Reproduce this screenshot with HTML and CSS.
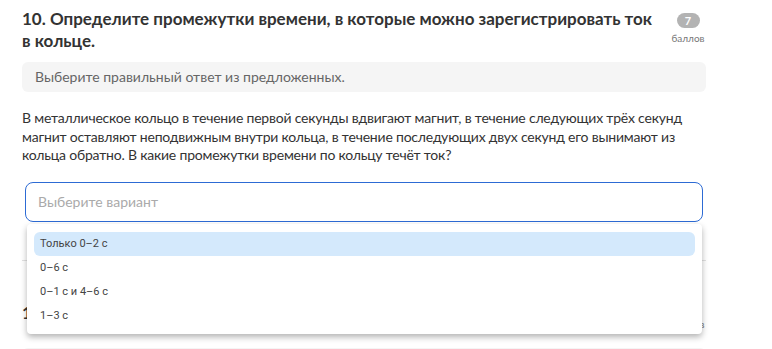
FILE: index.html
```html
<!DOCTYPE html>
<html lang="ru">
  <head>
    <meta charset="utf-8" />
    <title>Вопрос 10</title>
    <link rel="stylesheet" href="styles.css">
  </head>
  <body>
    <div class="quiz">
      <div class="question">
        <div class="q-head">
          <h2 class="q-title">10. Определите промежутки времени, в которые можно зарегистрировать ток в кольце.</h2>
          <div class="q-score">
            <span class="badge">7</span>
            <span class="points">баллов</span>
          </div>
        </div>
        <div class="hint">Выберите правильный ответ из предложенных.</div>
        <p class="q-text">В металлическое кольцо в течение первой секунды вдвигают магнит, в течение следующих трёх секунд магнит оставляют неподвижным внутри кольца, в течение последующих двух секунд его вынимают из кольца обратно. В какие промежутки времени по кольцу течёт ток?</p>
        <div class="select">
          <div class="select-box">Выберите вариант</div>
          <ul class="dropdown">
            <li class="option active">Только 0–2 с</li>
            <li class="option">0–6 с</li>
            <li class="option">0–1 с и 4–6 с</li>
            <li class="option">1–3 с</li>
          </ul>
        </div>
      </div>
      <div class="question next">
        <div class="q-head">
          <h2 class="q-title">11. Укажите, как изменится сила тока в цепи</h2>
          <div class="q-score">
            <span class="badge">5</span>
            <span class="points">баллов</span>
          </div>
        </div>
        <div class="hint">Выберите правильный ответ из предложенных.</div>
      </div>
    </div>
  </body>
</html>
```

FILE: styles.css
```css
body {
  margin: 0;
  background: #fff;
  font-family: "Lato", "Noto Sans", sans-serif;
  color: #333;
}
.quiz {
  padding: 8px 66px 0 22px;
}
.question {
  padding-bottom: 38px;
  border-bottom: 1px solid #e2e2e2;
}
.question.next {
  border-bottom: none;
  padding-top: 41px;
}
.q-head {
  display: flex;
  align-items: flex-start;
}
.q-title {
  flex: 1;
  margin: 0;
  font-size: 17px;
  line-height: 22px;
  font-weight: 700;
  color: #333;
  padding-right: 10px;
}
.q-score {
  display: flex;
  flex-direction: column;
  align-items: center;
  width: 36px;
  padding-top: 5px;
}
.next .q-score {
  padding-top: 0;
}
.next .points {
  margin-top: 1px;
}
.next .hint {
  margin-top: 18px;
}
.badge {
  width: 23px;
  height: 15px;
  border-radius: 8px;
  background: #b3b3b3;
  color: #fff;
  font-size: 11px;
  font-weight: 700;
  line-height: 15px;
  text-align: center;
}
.points {
  margin-top: 4px;
  font-size: 10px;
  color: #777;
}
.hint {
  margin-top: 10px;
  height: 30px;
  line-height: 30px;
  padding: 0 13px;
  background: #f5f5f5;
  border-radius: 6px;
  font-size: 14px;
  color: #666;
}
.q-text {
  margin: 17px 0 0;
  font-size: 14px;
  line-height: 18.5px;
  letter-spacing: -0.2px;
  color: #333;
}
.select {
  position: relative;
  margin: 17px 3px 0;
}
.select-box {
  height: 38px;
  line-height: 38px;
  border: 1px solid #2d6bd4;
  border-radius: 8px;
  padding: 0 12px;
  font-size: 14px;
  color: #aaa;
}
.dropdown {
  position: absolute;
  top: 42px;
  left: 2px;
  right: 1px;
  z-index: 2;
  margin: 0;
  padding: 8px 7px 6px;
  list-style: none;
  background: #fff;
  border-radius: 4px;
  box-shadow: 0 3px 6px rgba(0, 0, 0, 0.3);
}
.option {
  height: 24px;
  line-height: 24px;
  padding-left: 6px;
  border-radius: 6px;
  font-family: "Roboto", sans-serif;
  font-size: 11px;
  color: #444;
}
.option.active {
  background: #d4e9fc;
}
```
